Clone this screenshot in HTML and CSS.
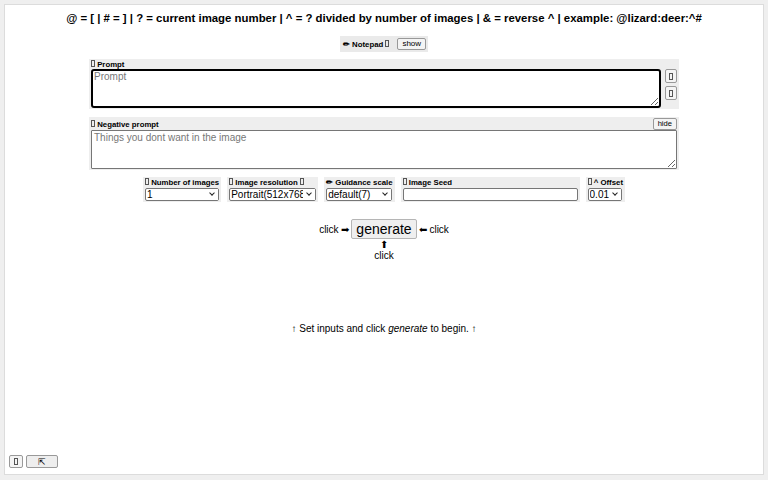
FILE: index.html
```html
<!DOCTYPE html>
<html>
<head>
<meta charset="utf-8">
<link rel="stylesheet" href="styles.css">
</head>
<body>
<div class="app">
  <div class="title">@ = [ | # = ] | ? = current image number | ^ = ? divided by number of images | &amp; = reverse ^ | example: @lizard:deer:^#</div>
  <div class="notepad">
    <span class="lbl">✏ Notepad <span class="tofu"></span></span>
    <button class="btn">show</button>
  </div>
  <div class="section prompt">
    <div class="head"><span class="lbl"><span class="tofu"></span> Prompt</span></div>
    <div class="row">
      <textarea class="ta focus" placeholder="Prompt"></textarea>
      <div class="side">
        <button class="btn sq"><span class="tofu"></span></button>
        <button class="btn sq"><span class="tofu"></span></button>
      </div>
    </div>
  </div>
  <div class="section neg">
    <div class="head"><span class="lbl"><span class="tofu"></span> Negative prompt</span><button class="btn">hide</button></div>
    <textarea class="ta" placeholder="Things you dont want in the image"></textarea>
  </div>
  <div class="controls">
    <div class="ctl">
      <span class="lbl"><span class="tofu"></span> Number of images</span>
      <span class="selwrap w74"><select class="sel"><option>1</option></select></span>
    </div>
    <div class="ctl">
      <span class="lbl"><span class="tofu"></span> Image resolution <span class="tofu"></span></span>
      <span class="selwrap w87"><select class="sel"><option>Portrait(512x768px)</option></select></span>
    </div>
    <div class="ctl">
      <span class="lbl">✏ Guidance scale</span>
      <span class="selwrap w67"><select class="sel"><option>default(7)</option></select></span>
    </div>
    <div class="ctl">
      <span class="lbl"><span class="tofu"></span> Image Seed</span>
      <input class="seed" type="text">
    </div>
    <div class="ctl">
      <span class="lbl"><span class="tofu"></span> ^ Offset</span>
      <span class="selwrap w34"><select class="sel"><option>0.01</option></select></span>
    </div>
  </div>
  <div class="gen">
    <div class="genrow">
      <span class="click">click ➡</span>
      <button class="genbtn">generate</button>
      <span class="click">⬅ click</span>
    </div>
    <div class="below">⬆<br>click</div>
  </div>
  <div class="msg">↑ Set inputs and click <em>generate</em> to begin. ↑</div>
  <div class="corner">
    <button class="btn small"><span class="tofu"></span></button>
    <button class="btn wide">⇱</button>
  </div>
</div>
</body>
</html>
```
FILE: styles.css
```css
html, body {
  margin: 0;
  padding: 0;
  background: #efefef;
  font-family: "Liberation Sans", Arial, sans-serif;
  color: #000;
}
.app {
  margin: 4px;
  height: 471px;
  box-sizing: border-box;
  background: #fff;
  border: 1px solid #dcdcdc;
  display: flex;
  flex-direction: column;
  align-items: center;
  position: relative;
}
.title {
  font-weight: bold;
  font-size: 11.4px;
  margin-top: 7px;
  line-height: 13px;
  white-space: nowrap;
}
.tofu {
  display: inline-block;
  width: 2px;
  height: 5px;
  border: 0.6px solid #555;
  vertical-align: 0;
}
.lbl {
  font-weight: bold;
  font-size: 7.8px;
  line-height: 9px;
  white-space: nowrap;
}
.btn {
  font-family: "Liberation Sans", Arial, sans-serif;
  font-size: 7.6px;
  background: #f4f4f4;
  border: 1px solid #999;
  border-radius: 2px;
  padding: 0 4px;
  height: 12px;
  line-height: 10px;
  color: #000;
}
.notepad {
  margin-top: 11px;
  background: #eaeaea;
  display: flex;
  align-items: center;
  gap: 8px;
  padding: 2px 2px 2px 3px;
  height: 16px;
  box-sizing: border-box;
}
.notepad .btn { height: 12px; font-size: 8px; padding: 0 4px; }
.section {
  width: 590px;
  box-sizing: border-box;
  background: #eeeeee;
  padding: 1px 2px 1px 2px;
}
.prompt { margin-top: 7px; }
.neg { margin-top: 8px; }
.head {
  display: flex;
  align-items: center;
  justify-content: space-between;
  height: 9px;
}
.neg .head { height: 12px; }
.ta {
  display: block;
  resize: vertical;
  box-sizing: border-box;
  font-family: "Liberation Sans", Arial, sans-serif;
  font-size: 10px;
  padding: 1px 2px;
  margin: 0;
  border: 1px solid #767676;
  border-radius: 1px;
  background: #fff;
}
.ta::placeholder { color: #777; }
.ta.focus {
  width: 570px;
  height: 39px;
  border: 2px solid #000;
  border-radius: 3px;
  padding: 0 1px;
}
.neg .ta { width: 586px; height: 39px; }
.row {
  display: flex;
  gap: 4px;
}
.side {
  display: flex;
  flex-direction: column;
  gap: 3px;
}
.btn.sq {
  width: 12px;
  height: 14px;
  padding: 0;
  display: flex;
  align-items: center;
  justify-content: center;
}
.controls {
  margin-top: 7px;
  display: flex;
  gap: 6px;
  align-items: flex-start;
}
.ctl {
  background: #eeeeee;
  padding: 1px 2px 1px 2px;
  display: flex;
  flex-direction: column;
}
.ctl .lbl { display: block; line-height: 10px; height: 10px; }
.selwrap {
  position: relative;
  display: block;
  height: 13px;
}
.selwrap::before {
  content: "";
  position: absolute;
  right: 1px;
  top: 1px;
  width: 11px;
  height: 11px;
  background: #fff;
  pointer-events: none;
}
.selwrap::after {
  content: "";
  position: absolute;
  right: 5px;
  top: 3px;
  width: 3px;
  height: 3px;
  border-right: 1.3px solid #222;
  border-bottom: 1.3px solid #222;
  transform: rotate(45deg);
  pointer-events: none;
}
.sel {
  -webkit-appearance: none;
  appearance: none;
  display: block;
  font-family: "Liberation Sans", Arial, sans-serif;
  font-size: 10px;
  line-height: 11px;
  width: 100%;
  height: 13px;
  box-sizing: border-box;
  margin: 0;
  padding: 0 12px 0 1px;
  border: 1px solid #767676;
  border-radius: 2px;
  background: #fff;
  color: #000;
  overflow: hidden;
  white-space: nowrap;
}
.w74 { width: 74px; }
.w87 { width: 87px; }
.w67 { width: 66px; }
.w34 { width: 34px; }
.seed {
  display: block;
  width: 175px;
  height: 13px;
  box-sizing: border-box;
  margin: 0;
  border: 1px solid #767676;
  border-radius: 2px;
  padding: 0 2px;
  font-size: 10px;
}
.gen {
  margin-top: 17px;
  display: flex;
  flex-direction: column;
  align-items: center;
}
.genrow {
  display: flex;
  align-items: center;
  gap: 2px;
}
.click {
  font-size: 10px;
}
.genbtn {
  font-family: "Liberation Sans", Arial, sans-serif;
  font-size: 14px;
  height: 20px;
  padding: 0 4px;
  background: #efefef;
  border: 1px solid #b5b5b5;
  border-radius: 2px;
  color: #000;
}
.below {
  font-size: 10px;
  line-height: 11px;
  text-align: center;
  margin-top: 0;
}
.msg {
  margin-top: 62px;
  font-size: 10px;
}
.corner {
  position: absolute;
  left: 4px;
  bottom: 6px;
  display: flex;
  gap: 3px;
}
.btn.small {
  width: 14px;
  height: 13px;
  padding: 0;
  display: flex;
  align-items: center;
  justify-content: center;
}
.btn.wide {
  width: 32px;
  height: 13px;
  background: #eeeeee;
  font-size: 9px;
}
```
